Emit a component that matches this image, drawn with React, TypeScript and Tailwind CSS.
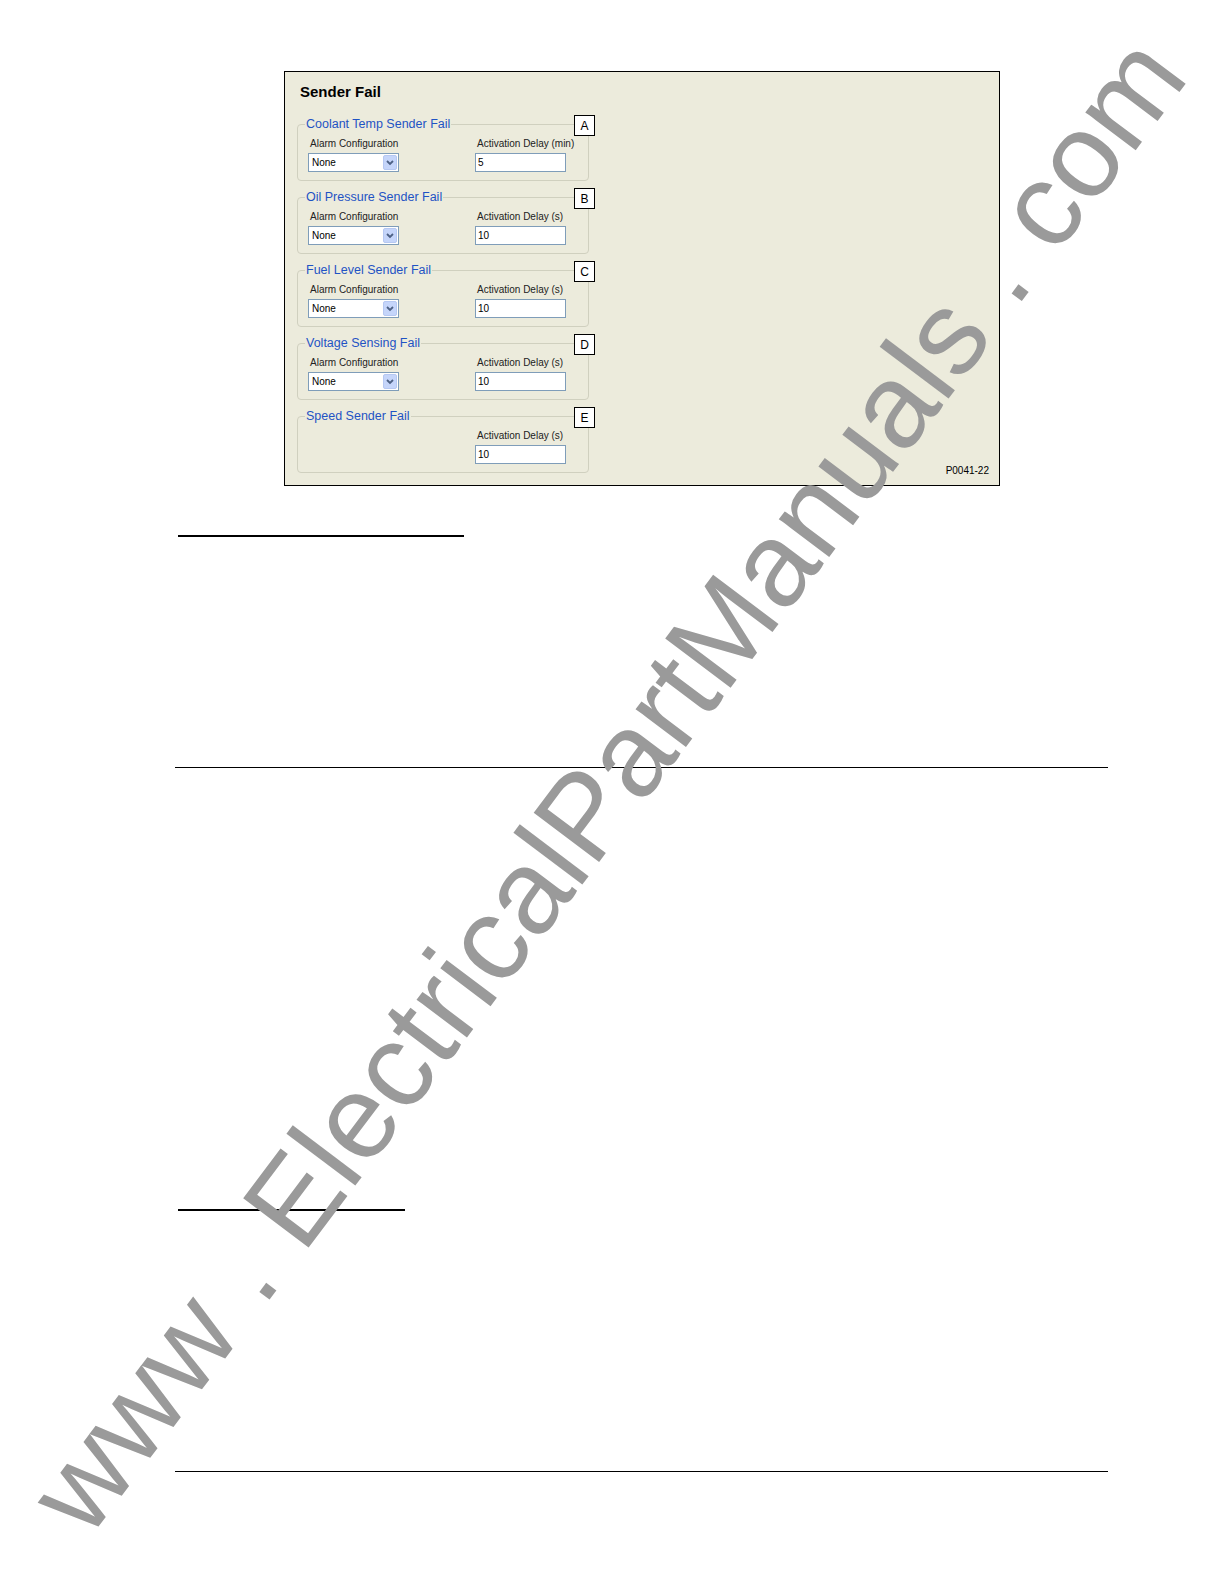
import React from "react";

interface Group {
  title: string;
  letter: string;
  unit: string;
  value: string;
  hasAlarm: boolean;
}

const groups: Group[] = [
  { title: "Coolant Temp Sender Fail", letter: "A", unit: "Activation Delay (min)", value: "5", hasAlarm: true },
  { title: "Oil Pressure Sender Fail", letter: "B", unit: "Activation Delay (s)", value: "10", hasAlarm: true },
  { title: "Fuel Level Sender Fail", letter: "C", unit: "Activation Delay (s)", value: "10", hasAlarm: true },
  { title: "Voltage Sensing Fail", letter: "D", unit: "Activation Delay (s)", value: "10", hasAlarm: true },
  { title: "Speed Sender Fail", letter: "E", unit: "Activation Delay (s)", value: "10", hasAlarm: false },
];

const SelectBox = () => {
  return (
    <div className="flex h-[19px] w-[91px] items-center border border-[#7f9db9] bg-white pl-[3px] pr-[1px]">
      <span className="flex-1 text-[10px] text-black">None</span>
      <div className="flex h-[15px] w-[14px] items-center justify-center rounded-[2px] border border-[#b6c8f2] bg-[#c5d5fa]">
        <svg width="8" height="6" viewBox="0 0 8 6">
          <path d="M1 1 L4 4 L7 1" fill="none" stroke="#4d6185" strokeWidth="1.8" />
        </svg>
      </div>
    </div>
  );
};

const GroupBox = ({ group }: { group: Group }) => {
  return (
    <div className="relative w-[292px]">
      <fieldset className="rounded-[4px] border border-[#d0d0bf] pl-[10px] pr-[8px] pt-[7px] pb-[8px]">
        <legend className="ml-[-3px] px-[1px] text-[12.5px] leading-[14px] text-[#1f53c4]">{group.title}</legend>
        <div className="flex items-end">
          <div className="flex w-[167px] flex-col">
            {group.hasAlarm && (
              <>
                <span className="pl-[2px] text-[10px] leading-[12px] text-[#222]">Alarm Configuration</span>
                <div className="mt-[3px]">
                  <SelectBox />
                </div>
              </>
            )}
          </div>
          <div className="flex flex-col">
            <span className="pl-[2px] text-[10px] leading-[12px] text-[#222]">{group.unit}</span>
            <div className="mt-[3px] flex h-[19px] w-[91px] items-center border border-[#7f9db9] bg-white pl-[2px] text-[10px] text-black">
              {group.value}
            </div>
          </div>
        </div>
      </fieldset>
      <div className="absolute left-[277px] top-[-2px] flex h-[21px] w-[21px] items-center justify-center border border-black bg-white text-[12px] text-black">
        {group.letter}
      </div>
    </div>
  );
};

const App: React.FC = () => {
  return (
    <div className="relative h-[1584px] w-full overflow-hidden bg-white font-['Liberation_Sans',Arial,sans-serif]">
      <div className="relative ml-[284px] mt-[71px] h-[415px] w-[716px] border border-black bg-[#ecebdc] pl-[12px] pt-[11px]">
        <h1 className="pl-[3px] text-[15px] font-bold leading-[18px] text-black">Sender Fail</h1>
        <div className="mt-[16px] flex flex-col gap-[9px]">
          {groups.map((group) => (
            <GroupBox key={group.letter} group={group} />
          ))}
        </div>
        <div className="absolute bottom-[8px] right-[10px] text-[10px] leading-[12px] text-black">P0041-22</div>
      </div>

      <div className="ml-[178px] mt-[49px] h-[2px] w-[286px] bg-black" />
      <div className="ml-[175px] mt-[230px] h-[1px] w-[933px] bg-black" />
      <div className="ml-[178px] mt-[441px] h-[2px] w-[227px] bg-black" />
      <div className="ml-[175px] mt-[260px] h-[1px] w-[933px] bg-black" />

      {/* watermark */}
      <div className="pointer-events-none absolute inset-0 overflow-hidden">
        <div className="absolute left-[606px] top-[784px] -translate-x-1/2 -translate-y-1/2 rotate-[-53deg] whitespace-nowrap text-[119px] leading-none text-[#9a9a9a]">
          www . ElectricalPartManuals . com
        </div>
      </div>
    </div>
  );
};

export default App;
